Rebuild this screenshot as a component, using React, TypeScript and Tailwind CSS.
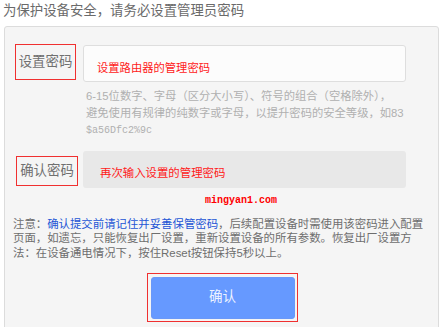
import React from "react";

const cjk = { fontFamily: '"Liberation Sans", "Noto Sans CJK SC", sans-serif' };

export default function App() {
  return (
    <div className="w-[441px] h-[327px] overflow-hidden bg-white" style={cjk}>
      <div className="pl-[3px] pt-[3px] h-[16px] leading-[16px] text-[13.4px] text-[#6a6a6a]">
        为保护设备安全，请务必设置管理员密码
      </div>
      <div className="ml-[4px] mt-[10px] w-[435px] h-[320px] border border-[#dcdcdc] rounded-[3px] bg-[#f5f5f5] pl-[8px] pt-[17px]">
        {/* row 1 */}
        <div className="flex items-start">
          <div className="ml-[2px] w-[61px] h-[36px] border-[1.5px] border-[#f03030] flex items-center justify-center text-[13.4px] text-[#707070] leading-none">
            设置密码
          </div>
          <div className="ml-[7px] mt-[1px] w-[323px] h-[37px] border border-[#dedede] rounded-[3px] bg-[#fcfcfc] pl-[13px] pt-[15px] text-[11.3px] leading-[14px] text-[#ff1a1a]">
            设置路由器的管理密码
          </div>
        </div>
        {/* hint */}
        <div className="ml-[73px] mt-[6px] text-[11.3px] leading-[16.5px] text-[#b0b0b0] whitespace-nowrap">
          6-15位数字、字母（区分大小写）、符号的组合（空格除外），
          <br />
          避免使用有规律的纯数字或字母，以提升密码的安全等级，如83
          <br />
          <span className="text-[10px]" style={{ fontFamily: '"Liberation Mono", monospace' }}>
            $a56Dfc2%9c
          </span>
        </div>
        {/* row 2 */}
        <div className="flex items-start mt-[11px]">
          <div className="ml-[3px] mt-[5px] w-[62px] h-[30px] border-[1.5px] border-[#f03030] flex items-center justify-center text-[13.4px] text-[#707070] leading-none">
            确认密码
          </div>
          <div className="ml-[5px] w-[323px] h-[37px] rounded-[3px] bg-[#e8e8e8] pl-[17px] pt-[15px] text-[11.4px] leading-[14px] text-[#ff1a1a]">
            再次输入设置的管理密码
          </div>
        </div>
        <div
          className="ml-[192px] mt-[7px] h-[12px] leading-[12px] text-[10px] text-[#ff0000] font-bold"
          style={{ fontFamily: '"Liberation Mono", monospace' }}
        >
          mingyan1.com
        </div>
        {/* note */}
        <div className="mt-[10px] text-[11.4px] leading-[14.5px] text-[#6e6e6e] whitespace-nowrap">
          注意：<span className="text-[#2456d6]">确认提交前请记住并妥善保管密码</span>，后续配置设备时需使用该密码进入配置
          <br />
          页面，如遗忘，只能恢复出厂设置，重新设置设备的所有参数。恢复出厂设置方
          <br />
          法：在设备通电情况下，按住Reset按钮保持5秒以上。
        </div>
        {/* button */}
        <div className="ml-[134px] mt-[13px] w-[151px] h-[49px] border-[1.5px] border-[#f03030] p-[2.5px]">
          <div className="w-full h-full rounded-[3px] bg-[#6699ff] border border-[#6a98f8] flex items-center justify-center text-[13.5px] text-[#eef3ff]">
            确认
          </div>
        </div>
      </div>
    </div>
  );
}
